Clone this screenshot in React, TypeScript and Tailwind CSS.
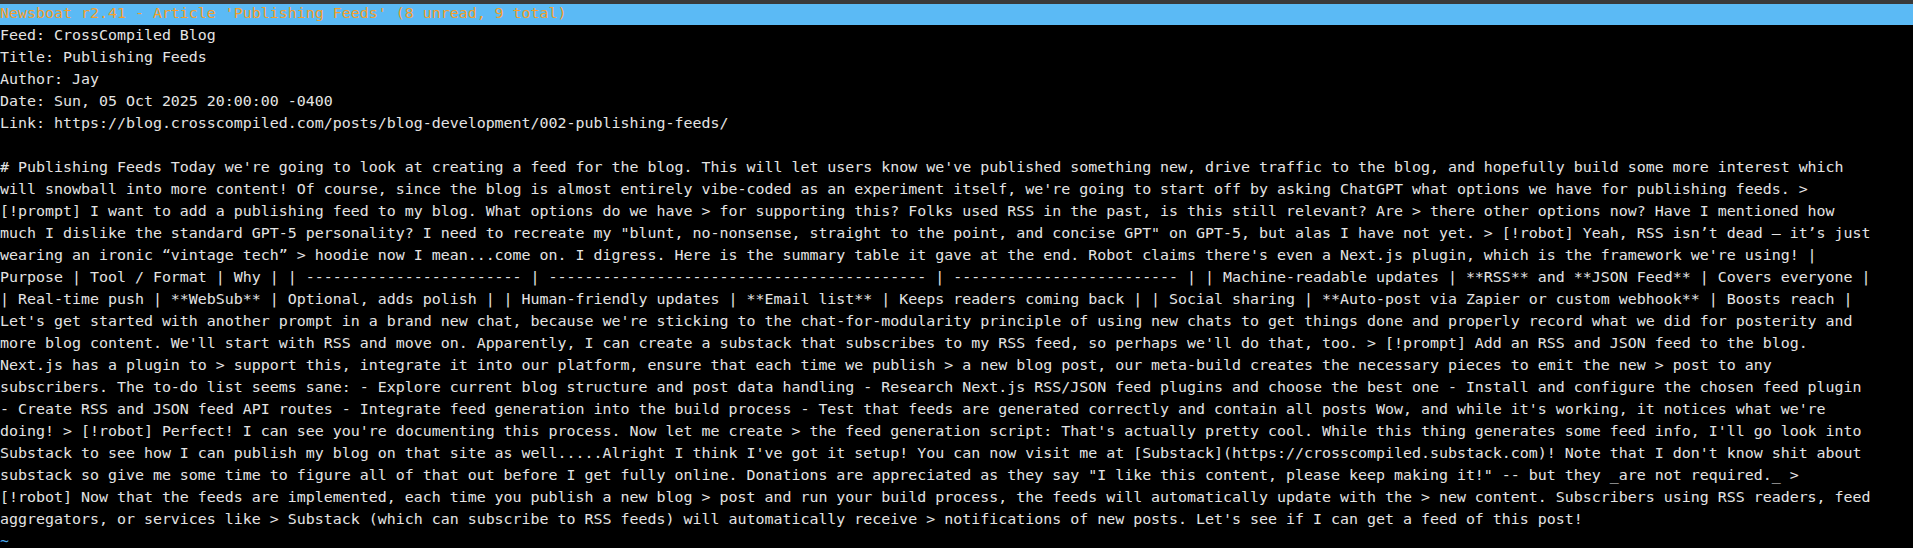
const lines: string[] = [
  "Feed: CrossCompiled Blog",
  "Title: Publishing Feeds",
  "Author: Jay",
  "Date: Sun, 05 Oct 2025 20:00:00 -0400",
  "Link: https://blog.crosscompiled.com/posts/blog-development/002-publishing-feeds/",
  "",
  "# Publishing Feeds Today we're going to look at creating a feed for the blog. This will let users know we've published something new, drive traffic to the blog, and hopefully build some more interest which",
  "will snowball into more content! Of course, since the blog is almost entirely vibe-coded as an experiment itself, we're going to start off by asking ChatGPT what options we have for publishing feeds. >",
  "[!prompt] I want to add a publishing feed to my blog. What options do we have > for supporting this? Folks used RSS in the past, is this still relevant? Are > there other options now? Have I mentioned how",
  "much I dislike the standard GPT-5 personality? I need to recreate my \"blunt, no-nonsense, straight to the point, and concise GPT\" on GPT-5, but alas I have not yet. > [!robot] Yeah, RSS isn\u2019t dead \u2014 it\u2019s just",
  "wearing an ironic \u201cvintage tech\u201d > hoodie now I mean...come on. I digress. Here is the summary table it gave at the end. Robot claims there's even a Next.js plugin, which is the framework we're using! |",
  "Purpose | Tool / Format | Why | | ------------------------ | ------------------------------------------ | ------------------------- | | Machine-readable updates | **RSS** and **JSON Feed** | Covers everyone |",
  "| Real-time push | **WebSub** | Optional, adds polish | | Human-friendly updates | **Email list** | Keeps readers coming back | | Social sharing | **Auto-post via Zapier or custom webhook** | Boosts reach |",
  "Let's get started with another prompt in a brand new chat, because we're sticking to the chat-for-modularity principle of using new chats to get things done and properly record what we did for posterity and",
  "more blog content. We'll start with RSS and move on. Apparently, I can create a substack that subscribes to my RSS feed, so perhaps we'll do that, too. > [!prompt] Add an RSS and JSON feed to the blog.",
  "Next.js has a plugin to > support this, integrate it into our platform, ensure that each time we publish > a new blog post, our meta-build creates the necessary pieces to emit the new > post to any",
  "subscribers. The to-do list seems sane: - Explore current blog structure and post data handling - Research Next.js RSS/JSON feed plugins and choose the best one - Install and configure the chosen feed plugin",
  "- Create RSS and JSON feed API routes - Integrate feed generation into the build process - Test that feeds are generated correctly and contain all posts Wow, and while it's working, it notices what we're",
  "doing! > [!robot] Perfect! I can see you're documenting this process. Now let me create > the feed generation script: That's actually pretty cool. While this thing generates some feed info, I'll go look into",
  "Substack to see how I can publish my blog on that site as well.....Alright I think I've got it setup! You can now visit me at [Substack](https://crosscompiled.substack.com)! Note that I don't know shit about",
  "substack so give me some time to figure all of that out before I get fully online. Donations are appreciated as they say \"I like this content, please keep making it!\" -- but they _are not required._ >",
  "[!robot] Now that the feeds are implemented, each time you publish a new blog > post and run your build process, the feeds will automatically update with the > new content. Subscribers using RSS readers, feed",
  "aggregators, or services like > Substack (which can subscribe to RSS feeds) will automatically receive > notifications of new posts. Let's see if I can get a feed of this post!",
];

export default function App() {
  return (
    <div className="w-[1913px] h-[548px] overflow-hidden bg-black font-['DejaVu_Sans_Mono',monospace] text-[14.95px]">
      <div className="h-[4px] bg-[#3a3a3a]" />
      <div className="h-[21px] bg-[#5bbaf5] text-[#f5a02c] leading-[18px] whitespace-pre">
        Newsboat r2.41 - Article 'Publishing Feeds' (8 unread, 9 total)
      </div>
      {lines.map((line, i) => (
        <div key={i} className="h-[22px] leading-[20px] whitespace-pre text-[#e4e4e4]">
          {line}
        </div>
      ))}
      <div className="h-[22px] leading-[20px] whitespace-pre text-[#4aa8ec]">~</div>
    </div>
  );
}
